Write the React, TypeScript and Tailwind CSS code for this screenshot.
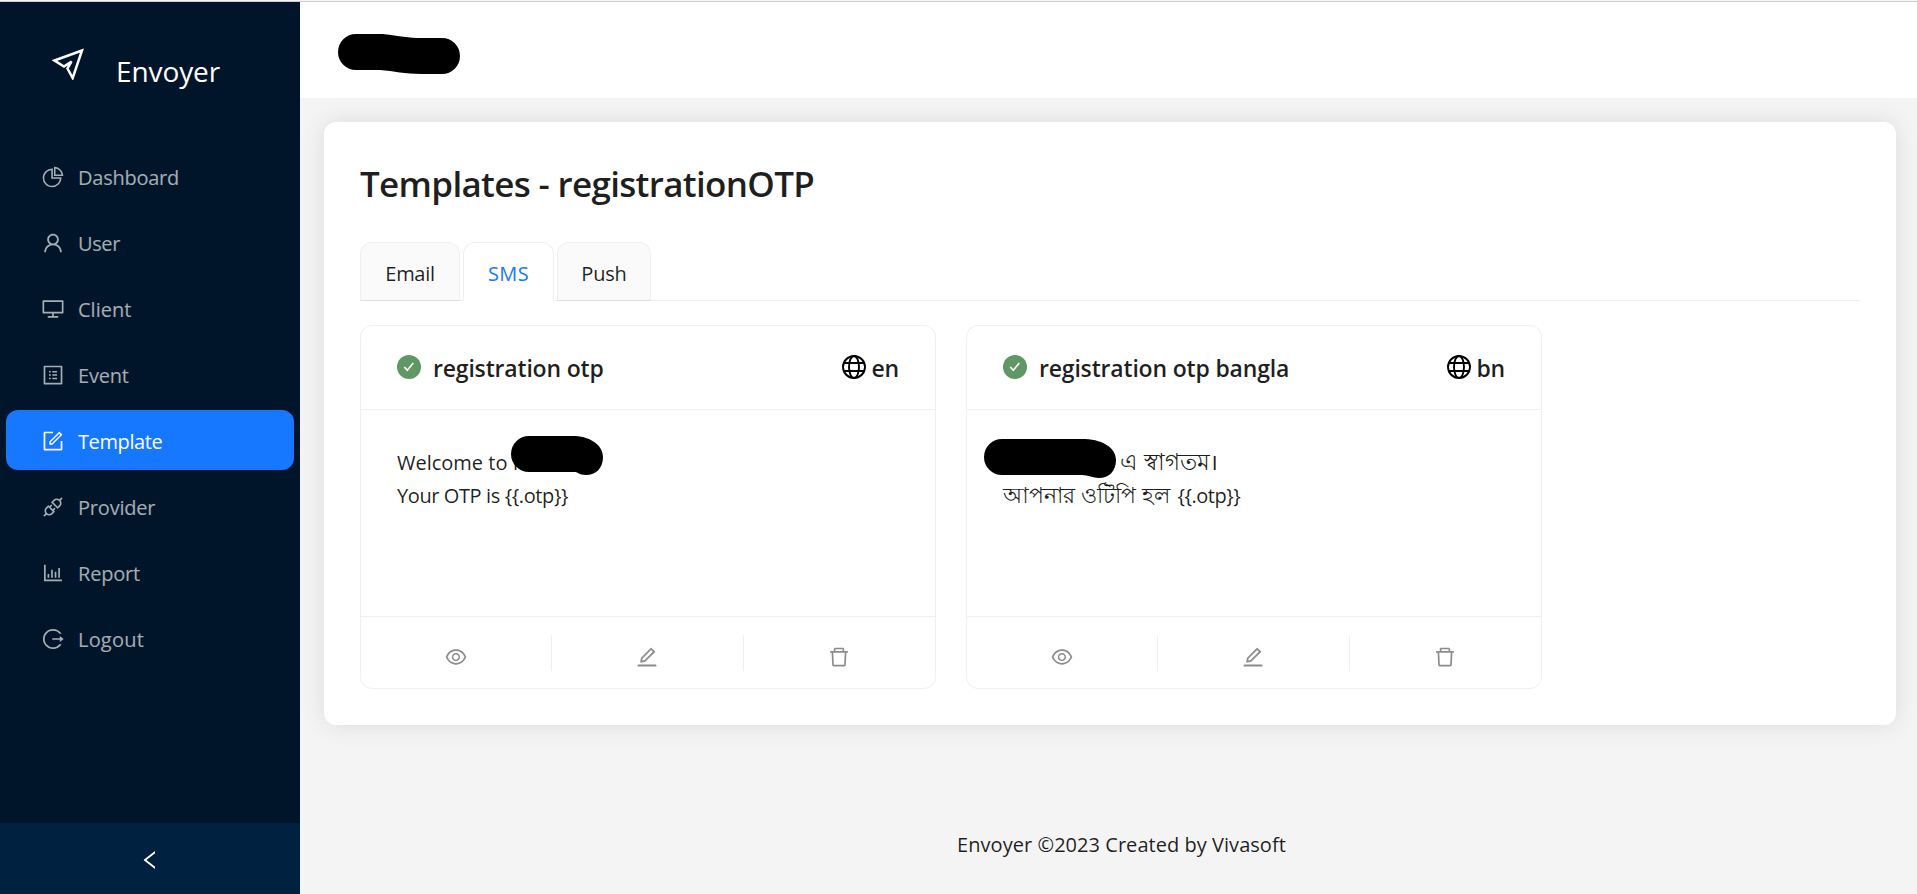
import React from "react";
import {
  AiOutlinePieChart, AiOutlineUser, AiOutlineDesktop, AiOutlineProfile, AiOutlineForm, AiOutlineApi,
  AiOutlineBarChart, AiOutlineLogout, AiOutlineLeft, AiOutlineEye, AiOutlineEdit, AiOutlineDelete,
} from "react-icons/ai";
import type { IconType } from "react-icons";

const menu: { label: string; icon: IconType; tracking: string; active?: boolean }[] = [
  { label: "Dashboard", icon: AiOutlinePieChart, tracking: "tracking-[-0.25px]" },
  { label: "User", icon: AiOutlineUser, tracking: "tracking-[-0.4px]" },
  { label: "Client", icon: AiOutlineDesktop, tracking: "tracking-normal" },
  { label: "Event", icon: AiOutlineProfile, tracking: "tracking-[-0.2px]" },
  { label: "Template", icon: AiOutlineForm, tracking: "tracking-[-0.4px]", active: true },
  { label: "Provider", icon: AiOutlineApi, tracking: "tracking-[-0.2px]" },
  { label: "Report", icon: AiOutlineBarChart, tracking: "tracking-[-0.2px]" },
  { label: "Logout", icon: AiOutlineLogout, tracking: "tracking-[0.2px]" },
];

function Sidebar() {
  return (
    <aside className="flex w-[300px] shrink-0 flex-col bg-[#001529]">
      <div className="flex h-[130px] items-start pl-[52px] pt-[46px]">
        <svg viewBox="0 0 32 32" className="size-8" fill="none" stroke="white" strokeWidth="2.500">
          <path d="M30 2.500 2.500 12.500 12 18.500 19.500 13.500 15.500 20.500 20.700 30Z" />
        </svg>
        <span className="ml-8 text-[28px] leading-[46px] tracking-[-0.1px] text-white">Envoyer</span>
      </div>
      <nav className="flex flex-1 flex-col gap-1.5 px-1.5 pt-3.5">
        {menu.map(({ label, icon: Icon, tracking, active }) => (
          <div
            key={label}
            className={`flex h-[60px] items-center rounded-xl pl-[34.5px] pt-[3px] text-[20px] ${active ? "bg-[#1677ff] text-white" : "text-white/65"}`}
          >
            <Icon className="mb-px size-6" />
            <span className={`ml-[13.5px] ${tracking}`}>{label}</span>
          </div>
        ))}
      </nav>
      <div className="flex h-[71px] items-center justify-center bg-[#002140] pt-[3px] text-white">
        <AiOutlineLeft className="size-6" />
      </div>
    </aside>
  );
}

function Globe() {
  return (
    <svg viewBox="0 0 24 24" className="mb-0.5 size-6" fill="none" stroke="black" strokeWidth="1.900">
      <circle cx="12" cy="12" r="11" />
      <ellipse cx="12" cy="12" rx="5" ry="11" />
      <path d="M2 8h20M2 16h20" />
    </svg>
  );
}

function TemplateCard({ title, lang, children }: { title: string; lang: string; children: React.ReactNode }) {
  return (
    <section className="h-[364px] w-[576px] rounded-xl border border-[#f0f0f0] bg-white">
      <header className="flex h-[84px] items-center border-b border-[#f0f0f0] px-9 text-[23px] font-semibold tracking-[-0.18px]">
        <svg viewBox="0 0 24 24" className="mb-0.5 size-6">
          <circle cx="12" cy="12" r="12" fill="#5f9865" />
          <path d="m7.300 12 3 3.300 6-7.300" fill="none" stroke="white" strokeWidth="1.600" />
        </svg>
        <h2 className="ml-3 flex-1 pt-0.5">{title}</h2>
        <Globe />
        <span className="ml-[5px] pt-0.5">{lang}</span>
      </header>
      <div className="relative h-[207px] border-b border-[#f0f0f0] px-9 pt-9 text-[20px] leading-[33px]">{children}</div>
      <footer className="grid h-[71px] grid-cols-3 items-center divide-x divide-[#f0f0f0] text-[#8c8c8c]">
        {[AiOutlineEye, AiOutlineEdit, AiOutlineDelete].map((Icon, i) => (
          <div key={i} className="flex h-9 items-center justify-center pt-[9px]">
            <Icon className="size-6" />
          </div>
        ))}
      </footer>
    </section>
  );
}

export default function App() {
  return (
    <div className="flex h-[894px] w-full flex-col overflow-hidden bg-[#f4f4f4] font-['Open_Sans','Noto_Sans',sans-serif] text-black/88">
      <div className="h-0.5 shrink-0 border-b border-[#cccccc] bg-[#f7f7f7]" />
      <div className="flex min-h-0 flex-1">
        <Sidebar />
        <div className="flex min-w-0 flex-1 flex-col">
          <header className="flex h-24 items-center bg-white pl-[38px] pt-[7px]">
            <svg viewBox="0 0 122 42" className="h-[42px] w-[122px]">
              <path d="M18 1H45C62 3 70 5 84 5H104A18 18 0 0 1 104 41H83C67 41 56 38 42 37H18A18 18 0 0 1 18 1Z" />
            </svg>
          </header>
          <main className="mx-6 mr-[21px] mt-6 h-[603px] rounded-xl bg-white px-9 pt-[37px] shadow-[0_0_24px_rgba(0,0,0,0.1)]">
            <h1 className="h-[83px] text-[35px] font-semibold leading-[50px] tracking-[-0.68px]">Templates - registrationOTP</h1>
            <div className="flex h-[59px] gap-[3px] border-b border-[#f0f0f0] text-[20px]">
              <div className="flex h-[59px] w-[100px] items-center justify-center rounded-t-xl border border-[#f0f0f0] border-b-[#dddddd] bg-[#fafafa] pt-1 tracking-[-0.3px]">Email</div>
              <div className="flex h-[59px] w-[91px] items-center justify-center rounded-t-xl border border-[#f0f0f0] border-b-white bg-white pt-1 tracking-[0.4px] text-[#1677ff]">SMS</div>
              <div className="flex h-[59px] w-[94px] items-center justify-center rounded-t-xl border border-[#f0f0f0] border-b-[#dddddd] bg-[#fafafa] pt-1 tracking-[-0.2px]">Push</div>
            </div>
            <div className="mt-6 flex gap-[30px]">
              <TemplateCard title="registration otp" lang="en">
                <p>Welcome to F</p>
                <p className="tracking-[-0.4px]">Your OTP is {"{{.otp}}"}</p>
                <svg viewBox="0 0 94 40" className="absolute left-[150px] top-[26px] h-10 w-[94px]">
                  <path d="M18 0H64C81 1 92 10 92 21C92 32 85 39 75 39C71 39 68 38 65 36H18A18 18 0 0 1 18 0Z" />
                </svg>
              </TemplateCard>
              <TemplateCard title="registration otp bangla" lang="bn">
                <p className="-mt-px pl-[105px] text-[22.5px]">. এ স্বাগতম।</p>
                <p><span className="text-[22.2px]">আপনার ওটিপি হল</span><span className="ml-2 tracking-[-0.5px]">{"{{.otp}}"}</span></p>
                <svg viewBox="0 0 133 40" className="absolute left-[17px] top-[29px] h-10 w-[133px]">
                  <path d="M18 0H101C121 1 132 10 132 21C132 32 125 39 115 39C109 39 104 36 98 36H18A18 18 0 0 1 18 0Z" />
                </svg>
              </TemplateCard>
            </div>
          </main>
          <footer className="mt-[101px] pl-[26px] text-center text-[20px] leading-[37px] tracking-[0.04px]">Envoyer ©2023 Created by Vivasoft</footer>
        </div>
      </div>
    </div>
  );
}
